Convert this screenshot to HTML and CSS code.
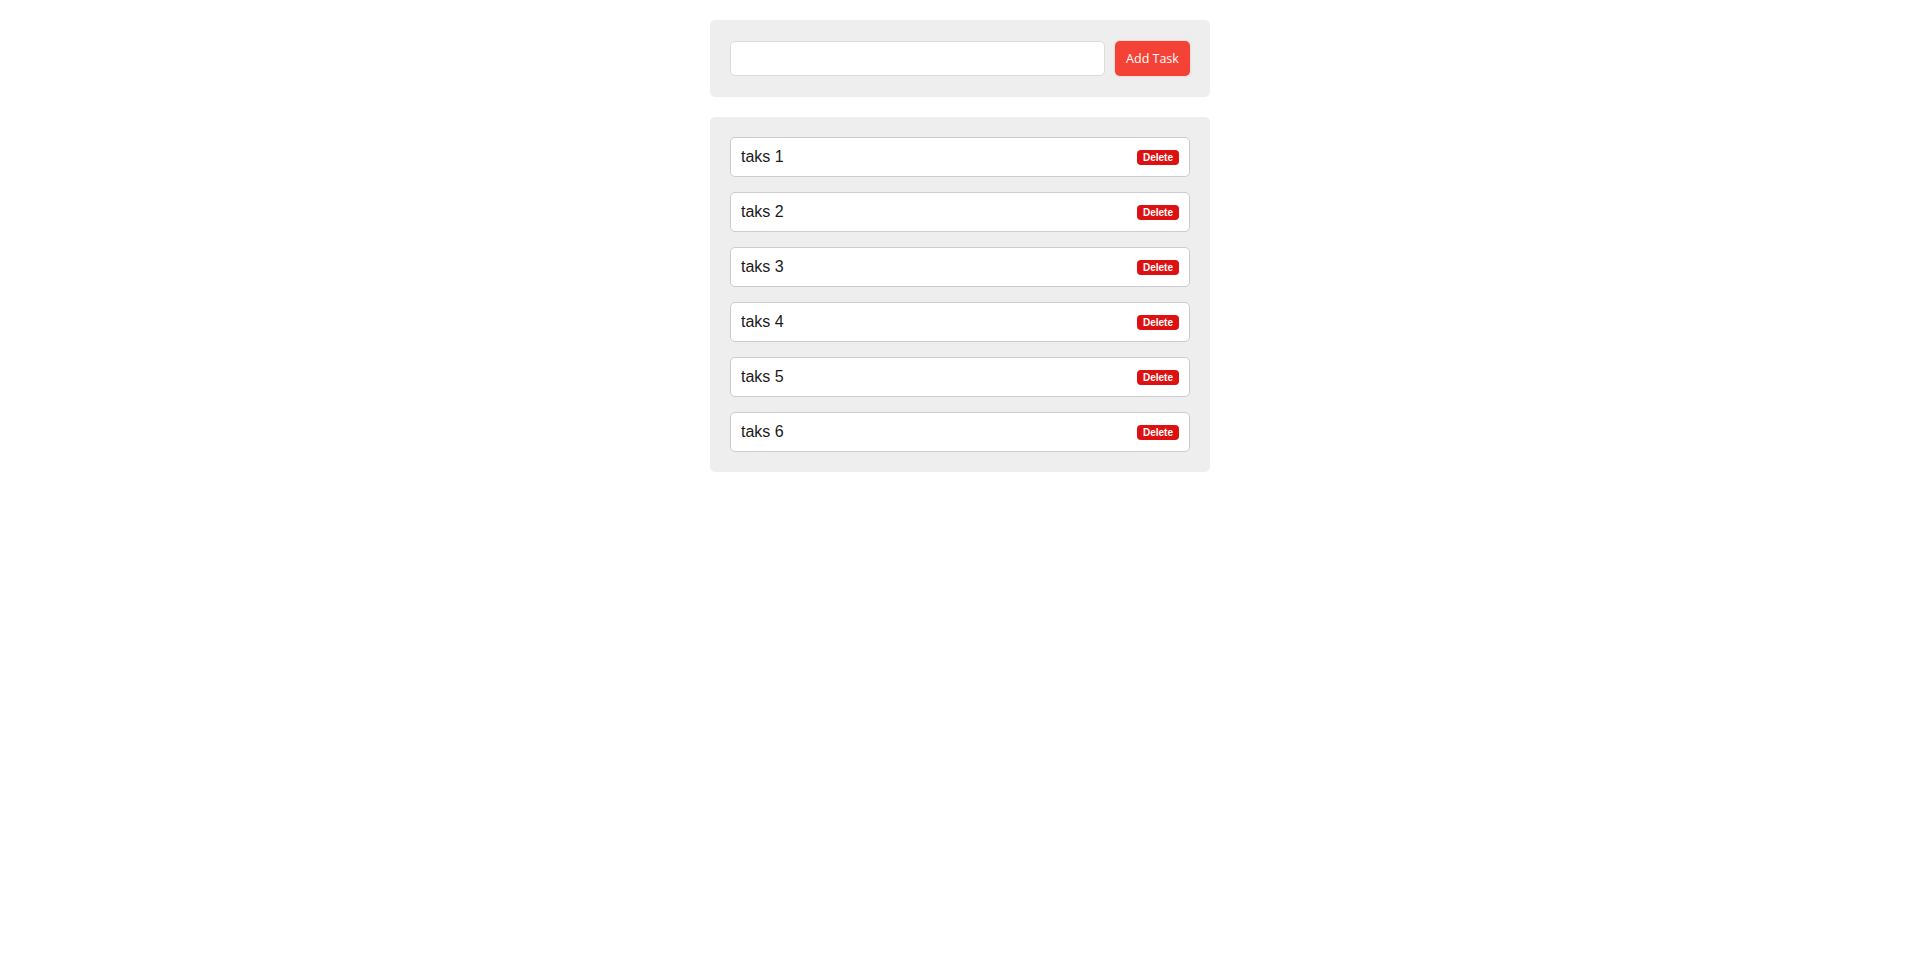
FILE: index.html
```html
<!DOCTYPE html>
<html lang="en">
<head>
<meta charset="utf-8">
<title>Tasks</title>
<link rel="stylesheet" href="styles.css">
</head>
<body>
<main class="app">
  <section class="panel add-panel">
    <input class="task-input" type="text">
    <button class="add-btn" type="button">Add Task</button>
  </section>
  <section class="panel list-panel">
    <ul class="task-list">
      <li class="task"><span class="task-name">taks 1</span><button class="del-btn" type="button">Delete</button></li>
      <li class="task"><span class="task-name">taks 2</span><button class="del-btn" type="button">Delete</button></li>
      <li class="task"><span class="task-name">taks 3</span><button class="del-btn" type="button">Delete</button></li>
      <li class="task"><span class="task-name">taks 4</span><button class="del-btn" type="button">Delete</button></li>
      <li class="task"><span class="task-name">taks 5</span><button class="del-btn" type="button">Delete</button></li>
      <li class="task"><span class="task-name">taks 6</span><button class="del-btn" type="button">Delete</button></li>
    </ul>
  </section>
</main>
</body>
</html>
```

FILE: styles.css
```css
html, body {
  margin: 0;
  padding: 0;
  background: #ffffff;
  font-family: "Liberation Sans", Arial, sans-serif;
}

.app {
  width: 500px;
  margin: 20px auto 0;
  display: flex;
  flex-direction: column;
  gap: 20px;
}

.panel {
  background: #eeeeee;
  border-radius: 5px;
  box-sizing: border-box;
}

.add-panel {
  display: flex;
  gap: 10px;
  padding: 21px 20px;
  height: 77px;
}

.task-input {
  flex: 1;
  height: 35px;
  box-sizing: border-box;
  border: 1px solid #dcdcdc;
  border-radius: 5px;
  background: #ffffff;
  outline: none;
  padding: 0 8px;
  font-size: 14px;
}

.add-btn {
  width: 75px;
  height: 35px;
  border: none;
  border-radius: 5px;
  background: #f44336;
  color: #ffffff;
  font-family: "Open Sans", "Liberation Sans", sans-serif;
  font-size: 12.5px;
  padding: 0;
  box-shadow: 0 0 2px rgba(244, 67, 54, 0.35);
}

.list-panel {
  padding: 20px;
}

.task-list {
  list-style: none;
  margin: 0;
  padding: 0;
  display: flex;
  flex-direction: column;
  gap: 15px;
}

.task {
  height: 40px;
  box-sizing: border-box;
  border: 1px solid #cccccc;
  border-radius: 5px;
  background: #ffffff;
  display: flex;
  align-items: center;
  justify-content: space-between;
  padding: 0 10px;
}

.task-name {
  font-size: 16px;
  color: #1a1a1a;
}

.del-btn {
  height: 15px;
  border: none;
  border-radius: 4px;
  background: #dd1111;
  color: #ffffff;
  font-family: "Liberation Sans", Arial, sans-serif;
  font-weight: bold;
  font-size: 10px;
  line-height: 15px;
  padding: 0 6px;
  margin-top: 1px;
}
```
